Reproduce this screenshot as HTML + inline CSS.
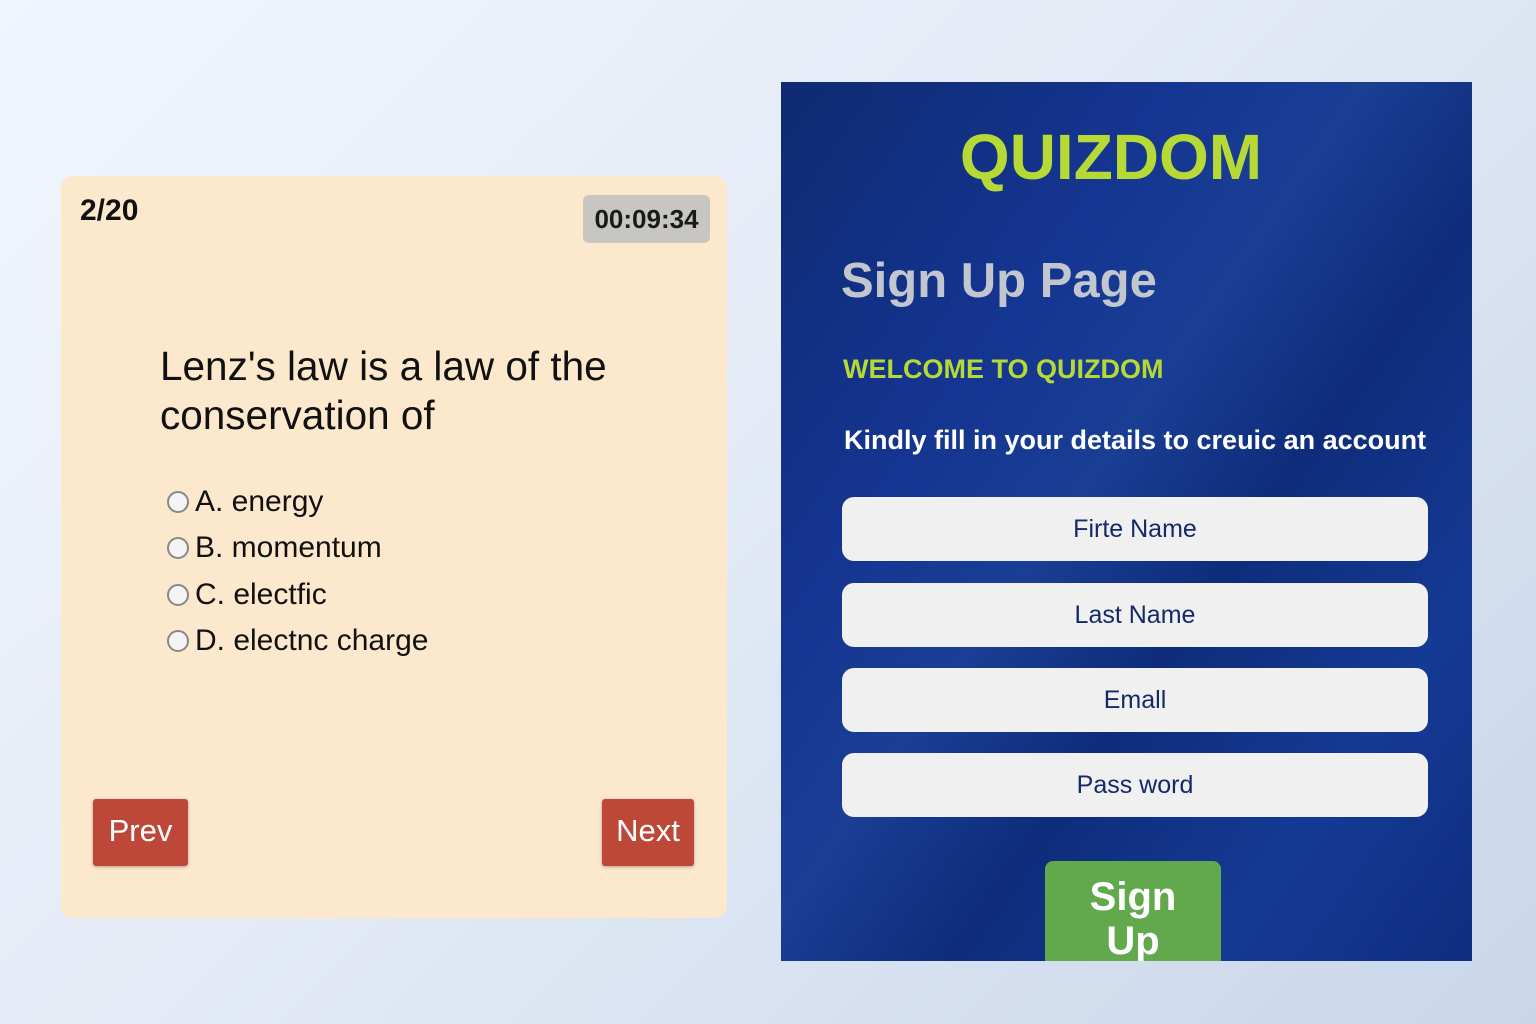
<!DOCTYPE html>
<html><head><style>
*{margin:0;padding:0;box-sizing:border-box}
body{width:1536px;height:1024px;overflow:hidden;position:relative;font-family:"Liberation Sans",sans-serif;background:linear-gradient(135deg,#f1f5fd 0%,#e4ebf6 45%,#c9d6ea 100%)}
.card{position:absolute;left:61px;top:176px;width:666px;height:742px;background:#fce8cd;border-radius:12px}
.abs{position:absolute}
.timer{left:583px;top:195px;width:127px;height:48px;background:#c8c6c2;border-radius:6px;font-weight:bold;font-size:26px;line-height:48px;text-align:center;color:#1a1a1a}
.q{left:160px;top:342px;font-size:40.5px;line-height:49px;color:#111}
.opt{left:167px;font-size:30px;color:#111;display:flex;align-items:center}
.opt i{display:inline-block;width:22px;height:22px;border:2px solid #888;border-radius:50%;background:#f4f4f4;margin-right:6px}
.btn{background:#bd4838;color:#fff;font-size:31px;text-align:center;border-radius:3px;box-shadow:0 1px 3px rgba(0,0,0,.3)}
.panel{position:absolute;left:781px;top:82px;width:691px;height:879px;overflow:hidden;background:linear-gradient(125deg,#0f2a72 0%,#143591 30%,#1a3e94 45%,#0e2c7a 60%,#153a94 80%,#0e2d80 100%)}
.inp{position:absolute;left:61px;width:586px;height:64px;background:#f0f0f0;border-radius:12px;color:#13296a;font-size:25px;text-align:center;line-height:64px}
</style></head><body>
<div class="card"></div>
<div class="abs" style="left:80px;top:194px;font-weight:bold;font-size:30px;color:#111">2/20</div>
<div class="abs timer">00:09:34</div>
<div class="abs q">Lenz's law is a law of the<br>conservation of</div>
<div class="abs opt" style="top:485px"><i></i>A. energy</div>
<div class="abs opt" style="top:531px"><i></i>B. momentum</div>
<div class="abs opt" style="top:578px"><i></i>C. electfic</div>
<div class="abs opt" style="top:624px"><i></i>D. electnc charge</div>
<div class="abs btn" style="left:93px;top:799px;width:95px;height:67px;line-height:64px">Prev</div>
<div class="abs btn" style="left:602px;top:799px;width:92px;height:67px;line-height:64px">Next</div>
<div class="panel">
<div class="abs" style="left:0;width:660px;text-align:center;top:38px;font-size:64px;font-weight:bold;color:#b6d935">QUIZDOM</div>
<div class="abs" style="left:60px;top:171px;font-size:49px;font-weight:bold;color:#c2c6cf">Sign Up Page</div>
<div class="abs" style="left:62px;top:272px;font-size:27px;font-weight:bold;color:#b6d935">WELCOME TO QUIZDOM</div>
<div class="abs" style="left:63px;top:343px;font-size:27px;font-weight:bold;color:#fff">Kindly fill in your details to creuic an account</div>
<div class="inp" style="top:415px">Firte Name</div>
<div class="inp" style="top:501px">Last Name</div>
<div class="inp" style="top:586px">Emall</div>
<div class="inp" style="top:671px">Pass word</div>
<div class="abs" style="left:264px;top:779px;width:176px;height:120px;background:#62a84d;border-radius:8px;color:#fff;font-weight:bold;font-size:40px;line-height:44px;text-align:center;padding-top:14px">Sign<br>Up</div>
</div>
</body></html>
